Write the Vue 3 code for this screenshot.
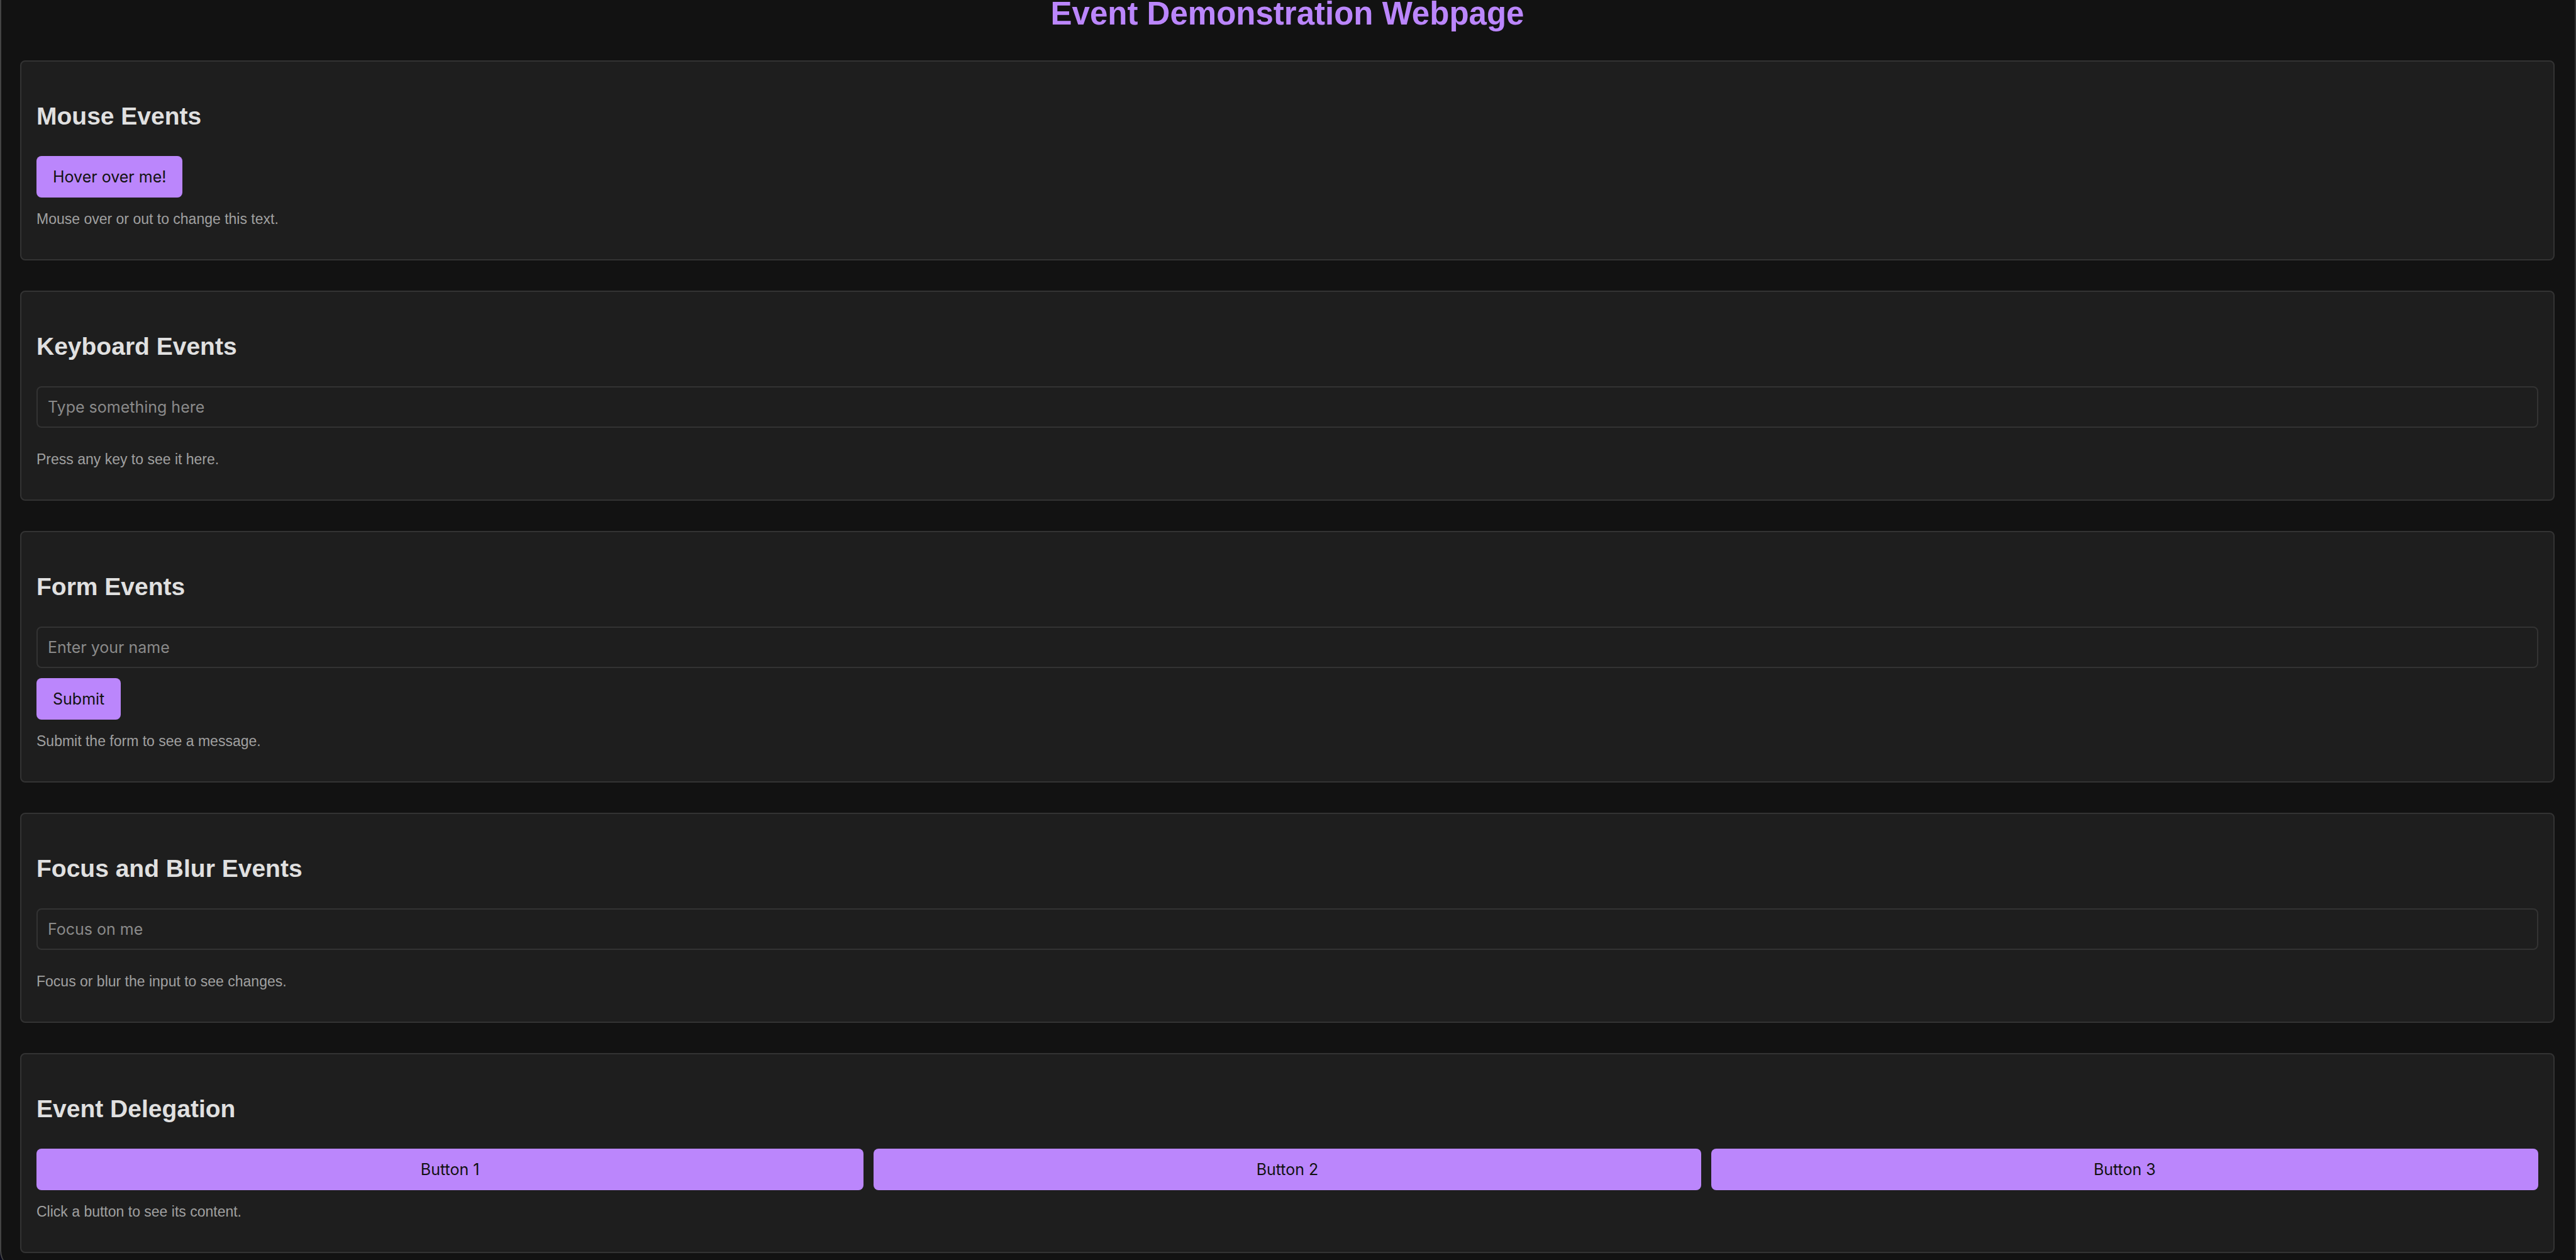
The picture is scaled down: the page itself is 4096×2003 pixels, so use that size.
<script setup>
import { ref } from 'vue'

const mouseText = ref('Mouse over or out to change this text.')
const keyText = ref('Press any key to see it here.')
const formText = ref('Submit the form to see a message.')
const focusText = ref('Focus or blur the input to see changes.')
const clickText = ref('Click a button to see its content.')
const name = ref('')
const buttons = ['Button 1', 'Button 2', 'Button 3']
</script>

<template>
  <div class="page">
    <h1>Event Demonstration Webpage</h1>
    <main>
      <section>
        <h2>Mouse Events</h2>
        <button
          type="button"
          @mouseover="mouseText = 'Mouse is over the button!'"
          @mouseout="mouseText = 'Mouse is out of the button!'"
        >Hover over me!</button>
        <p>{{ mouseText }}</p>
      </section>

      <section>
        <h2 id="keyboard">Keyboard Events</h2>
        <div class="field">
          <input
            type="text"
            aria-labelledby="keyboard"
            placeholder="Type something here"
            @keydown="keyText = `Key pressed: ${$event.key}`"
          />
        </div>
        <p>{{ keyText }}</p>
      </section>

      <section>
        <h2 id="form">Form Events</h2>
        <form @submit.prevent="formText = `Form submitted by ${name}`">
          <div class="field">
            <input v-model="name" type="text" aria-labelledby="form" placeholder="Enter your name" />
          </div>
          <button type="submit">Submit</button>
        </form>
        <p>{{ formText }}</p>
      </section>

      <section>
        <h2 id="focus">Focus and Blur Events</h2>
        <div class="field">
          <input
            type="text"
            aria-labelledby="focus"
            placeholder="Focus on me"
            @focus="focusText = 'Input is focused.'"
            @blur="focusText = 'Input lost focus.'"
          />
        </div>
        <p>{{ focusText }}</p>
      </section>

      <section>
        <h2>Event Delegation</h2>
        <div class="row">
          <button
            v-for="label in buttons"
            :key="label"
            type="button"
            @click="clickText = `You clicked ${label}`"
          >{{ label }}</button>
        </div>
        <p>{{ clickText }}</p>
      </section>
    </main>
  </div>
</template>

<style>
html {
  background: #0a0a1c;
}

body {
  margin: 0;
  overflow: hidden;
}
</style>

<style scoped>
.page {
  box-sizing: border-box;
  min-height: 100vh;
  padding: 0 32px 26px 30px;
  border: solid #333;
  border-width: 0 2px;
  border-left-color: #444;
  border-bottom-left-radius: 30px;
  background: #121212;
  color: #e0e0e0;
  font-family: Arial, "Liberation Sans", sans-serif;
}

h1 {
  margin: 0 0 53px;
  color: #bb86fc;
  font-size: 51px;
  line-height: 43px;
  text-align: center;
}

main {
  display: flex;
  flex-direction: column;
  gap: 48px;
}

section {
  padding: 24px;
  border: 2px solid #333;
  border-radius: 8px;
  background: #1e1e1e;
}

h2 {
  margin: 32px 0;
  font-size: 39px;
  line-height: 62px;
}

button,
input {
  box-sizing: border-box;
  height: 66px;
  border-radius: 8px;
  font-family: Inter, Arial, sans-serif;
  font-size: 25px;
}

button {
  display: block;
  padding: 0 26px;
  border: 0;
  background: #bb86fc;
  color: #121212;
  cursor: pointer;
}

.field {
  padding-bottom: 16px;
}

input {
  display: block;
  width: 100%;
  padding: 0 16px;
  border: 2px solid #333;
  background: #1e1e1e;
  color: #e0e0e0;
}

input::placeholder {
  color: #8a8a8a;
}

p {
  margin: 16px 0 22px;
  color: #a0a0a0;
  font-size: 23px;
  line-height: 36px;
}

.row {
  display: flex;
  gap: 16px;
}

.row button {
  flex: 1;
}
</style>
